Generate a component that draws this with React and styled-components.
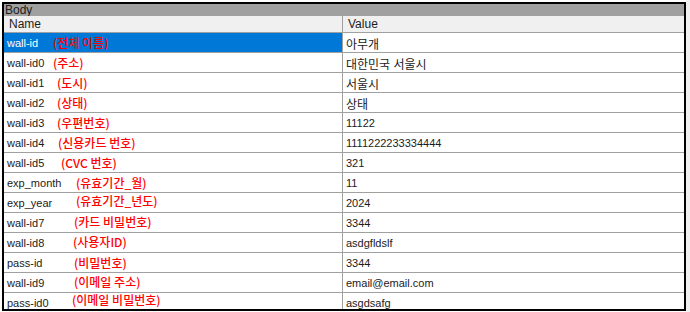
import React from "react";
import styled, { createGlobalStyle } from "styled-components";

const Global = createGlobalStyle`
  html, body {
    margin: 0;
    padding: 0;
    background: #ffffff;
  }
`;

const Page = styled.div`
  width: 690px;
  height: 312px;
  display: flex;
  padding: 2px 0 0 2px;
  box-sizing: border-box;
  background: linear-gradient(to right, #ffffff 686px, #f0f0f0 686px);
`;

const Panel = styled.div`
  width: 684px;
  height: 309px;
  box-sizing: border-box;
  border: 2px solid #000;
  overflow: hidden;
  display: flex;
  flex-direction: column;
  background: #fff;
  font-family: "Liberation Sans", Arial, "Noto Sans CJK KR", sans-serif;
  font-size: 11px;
  color: #1b1b1b;
`;

const TitleBar = styled.div`
  height: 12px;
  flex: none;
  background: #a0a0a0;
  font-size: 12px;
  line-height: 12px;
  padding-left: 1px;
  color: #1c1c1c;
`;

const Grid = styled.div`
  display: grid;
  grid-template-columns: 339px 1fr;
  grid-auto-rows: 20px;
  grid-template-rows: 17px;
`;

const HeadCell = styled.div`
  background: #f0f0f0;
  border-bottom: 1px solid #a0a0a0;
  border-right: ${(p) => (p.$last ? "none" : "1px solid #a0a0a0")};
  display: flex;
  align-items: center;
  padding-left: 5px;
  font-size: 12px;
  color: #1c1c1c;
`;

const NameCell = styled.div`
  position: relative;
  background: ${(p) => (p.$selected ? "#0078d7" : "#fff")};
  color: ${(p) => (p.$selected ? "#fff" : "#1b1b1b")};
  border-bottom: 1px solid #a0a0a0;
  border-right: 1px solid #a0a0a0;
  display: flex;
  align-items: center;
  padding-left: 3px;
  padding-top: 1px;
`;

const ValueCell = styled.div`
  border-bottom: 1px solid #a0a0a0;
  display: flex;
  align-items: center;
  padding-left: 3px;
  padding-top: 1px;
  font-size: ${(p) => (p.$cjk ? "12px" : "11px")};
  white-space: nowrap;
`;

const Note = styled.span`
  position: absolute;
  top: 50%;
  transform: translateY(-50%);
  color: #ff0000;
  font-family: "Noto Sans CJK KR", "Liberation Sans", sans-serif;
  font-size: 12px;
  font-weight: 500;
  white-space: nowrap;
  line-height: 1;
`;

const rows = [
  { name: "wall-id", note: "(전체 이름)", x: 49, dy: 0, value: "아무개" },
  { name: "wall-id0", note: "(주소)", x: 49, dy: 0, value: "대한민국 서울시" },
  { name: "wall-id1", note: "(도시)", x: 53, dy: 0, value: "서울시" },
  { name: "wall-id2", note: "(상태)", x: 53, dy: 0, value: "상태" },
  { name: "wall-id3", note: "(우편번호)", x: 53, dy: 0, value: "11122" },
  { name: "wall-id4", note: "(신용카드 번호)", x: 54, dy: 0, value: "1111222233334444" },
  { name: "wall-id5", note: "(CVC 번호)", x: 57, dy: 0, value: "321" },
  { name: "exp_month", note: "(유효기간_월)", x: 72, dy: 0, value: "11" },
  { name: "exp_year", note: "(유효기간_년도)", x: 72, dy: -2, value: "2024" },
  { name: "wall-id7", note: "(카드 비밀번호)", x: 70, dy: -1, value: "3344" },
  { name: "wall-id8", note: "(사용자ID)", x: 69, dy: -1, value: "asdgfldslf" },
  { name: "pass-id", note: "(비밀번호)", x: 70, dy: 0, value: "3344" },
  { name: "wall-id9", note: "(이메일 주소)", x: 70, dy: -1, value: "email@email.com" },
  { name: "pass-id0", note: "(이메일 비밀번호)", x: 68, dy: -3, value: "asgdsafg" },
];

const isKorean = (s) => /[\uac00-\ud7a3]/.test(s);

export default function App() {
  return (
    <Page>
      <Global />
      <Panel>
        <TitleBar>Body</TitleBar>
        <Grid>
          <HeadCell>Name</HeadCell>
          <HeadCell $last>Value</HeadCell>
          {rows.map((r, i) => (
            <React.Fragment key={r.name}>
              <NameCell $selected={i === 0}>
                {r.name}
                <Note style={{ left: r.x, marginTop: r.dy }}>{r.note}</Note>
              </NameCell>
              <ValueCell $cjk={isKorean(r.value)}>{r.value}</ValueCell>
            </React.Fragment>
          ))}
        </Grid>
      </Panel>
    </Page>
  );
}
